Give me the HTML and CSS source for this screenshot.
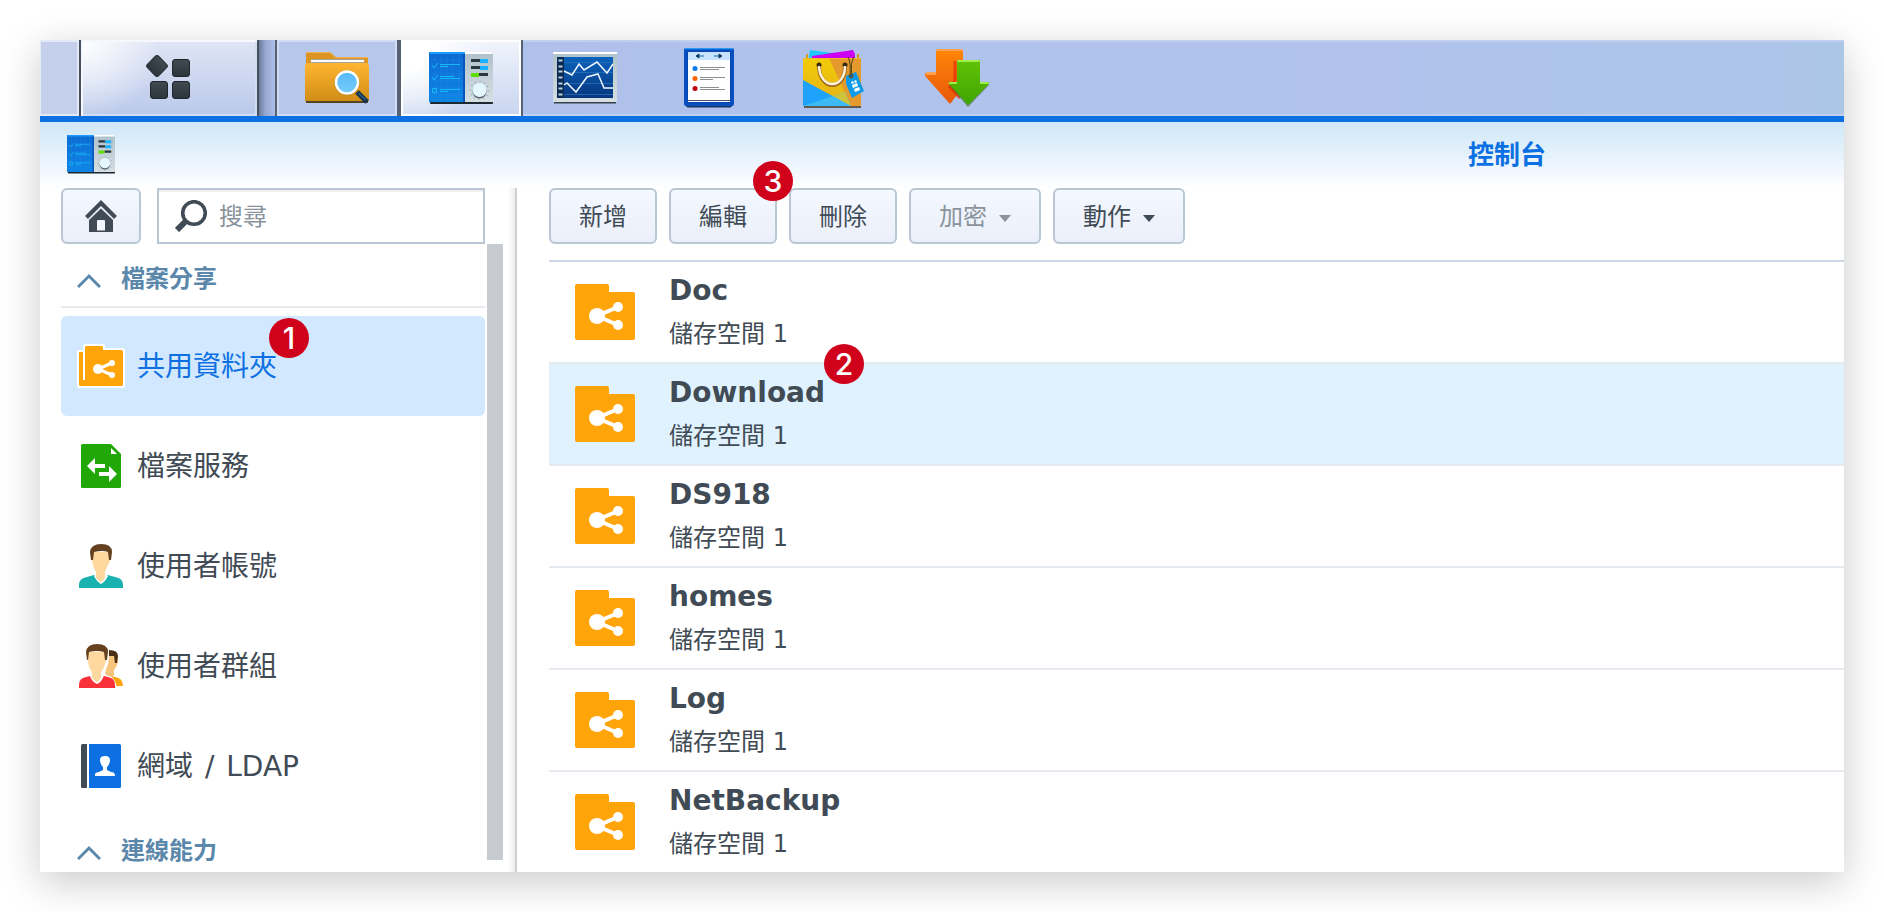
FILE: index.html
```html
<!DOCTYPE html>
<html lang="zh-Hant">
<head>
<meta charset="utf-8">
<title>控制台</title>
<link rel="stylesheet" href="styles.css">
</head>
<body>
<svg class="defs" width="0" height="0">
  <defs>
    <linearGradient id="dark" x1="0" y1="0" x2="0" y2="1"><stop offset="0" stop-color="#414951"/><stop offset="1" stop-color="#2c343c"/></linearGradient>
    <linearGradient id="gold" x1="0" y1="0" x2="0" y2="1"><stop offset="0" stop-color="#ffb531"/><stop offset="1" stop-color="#d08d16"/></linearGradient>
    <linearGradient id="lens" x1="0" y1="0" x2="0" y2="1"><stop offset="0" stop-color="#55b9f5"/><stop offset="1" stop-color="#78cdff"/></linearGradient>
    <linearGradient id="blue" x1="0" y1="0" x2="0" y2="1"><stop offset="0" stop-color="#0c69d0"/><stop offset="1" stop-color="#0e86e6"/></linearGradient>
    <linearGradient id="steel" x1="0" y1="0" x2="0" y2="1"><stop offset="0" stop-color="#b0c1cb"/><stop offset="1" stop-color="#d6dfe2"/></linearGradient>
    <linearGradient id="screen" x1="0" y1="0" x2="0" y2="1"><stop offset="0" stop-color="#0a62bb"/><stop offset="1" stop-color="#07367f"/></linearGradient>
    <linearGradient id="orange" x1="0" y1="0" x2="0" y2="1"><stop offset="0" stop-color="#ff8508"/><stop offset="1" stop-color="#e8570a"/></linearGradient>
    <linearGradient id="green" x1="0" y1="0" x2="0" y2="1"><stop offset="0" stop-color="#62c208"/><stop offset="1" stop-color="#3fa500"/></linearGradient>
    <linearGradient id="yellow" x1="0" y1="0" x2="0" y2="1"><stop offset="0" stop-color="#f2cb08"/><stop offset="1" stop-color="#e5b118"/></linearGradient>
    <symbol id="panel" viewBox="0 0 64 54">
      <rect x="1" y="49" width="63" height="3" rx="1" fill="#1d2833"/>
      <path d="M0 0H36V50H0Z" fill="url(#blue)"/>
      <path d="M6 2V50M12 2V50M18 2V50M24 2V50M30 2V50M0 8H34M0 15H34M0 22H34M0 29H34M0 36H34M0 43H34" stroke="#2d91ea" stroke-width=".5" opacity=".5"/>
      <path d="M0 2L1 0H36V2Z" fill="#1b9bff"/>
      <path d="M34 2H36V50H34Z" fill="#0a55bd"/>
      <path d="M36 0H63L64 2V50H36Z" fill="url(#steel)"/>
      <path d="M36 0H63L64 2H36Z" fill="#fff"/>
      <g stroke="#19b9f5" fill="none"><path d="M3 13l2 3 4-5M3 25l2 3 4-5"/><path d="M3.500 36.500h4v4h-4z"/><path d="M11 12.500H31M11 14.500H19M11 24.500H25M11 26.500H31M11 37.500H31M11 39.500H19"/></g>
      <g fill="#2b3741"><path d="M42 7h9v3h-9zM42 14h9v3h-9zM50 21h9v3h-9z"/></g>
      <path d="M51 7h8v4h-8zM51 14h8v4h-8z" fill="#18b2ff"/><path d="M42 21h8v4h-8z" fill="#5ddd05"/>
      <circle cx="50.500" cy="38.500" r="9" fill="none" stroke="#8f9ba4" stroke-width="1.500" stroke-dasharray=".8 3.900"/>
      <circle cx="50.500" cy="39.500" r="7" fill="#53606b"/><circle cx="50.500" cy="38" r="7" fill="#e4f6fe"/>
    </symbol>
    <symbol id="share" viewBox="0 0 60 56">
      <path d="M0 2Q0 0 2 0H32Q34 0 34 2V8H58Q60 8 60 10V54Q60 56 58 56H2Q0 56 0 54Z" fill="#ffa50a"/>
      <path d="M43 23L22 32L43 41" fill="none" stroke="#fff" stroke-width="4"/>
      <circle cx="22" cy="32" r="8" fill="#fff"/><circle cx="43" cy="23" r="5" fill="#fff"/><circle cx="43" cy="41" r="5" fill="#fff"/>
    </symbol>
  </defs>
</svg>
<div class="window">
  <nav class="taskbar">
    <div class="edge-cell"></div>
    <div class="menu-cell">
      <svg width="48" height="46" viewBox="0 0 48 46"><g fill="url(#dark)" stroke="#20262c" stroke-width="1"><rect x="4" y="4" width="16" height="16" rx="2.500" transform="rotate(45 12 12)"/><rect x="27.500" y="5.500" width="17" height="17" rx="2.500"/><rect x="5.500" y="27.500" width="17" height="17" rx="2.500"/><rect x="27.500" y="27.500" width="17" height="17" rx="2.500"/></g></svg>
    </div>
    <div class="menu-shade"></div>
    <div class="task">
      <svg width="64" height="54" viewBox="0 0 64 54"><rect x="1" y="48" width="62" height="3" fill="#584322"/><path d="M1 0H25L31 5H63V20H1Z" fill="#dc9521"/><path d="M1 .5H25L30 5.500H63" fill="none" stroke="#f0b559"/><path d="M6 7H59V12H6Z" fill="#fff"/><path d="M6 7.500H59M5 10.500H60" stroke="#aaa398"/><path d="M0 13L2 11H62L64 13V49H0Z" fill="url(#gold)"/><path d="M52 40L62 50" stroke="#14324c" stroke-width="5"/><path d="M53 41L61 48" stroke="#2b5f83" stroke-width="1.500"/><circle cx="42" cy="31" r="12.500" fill="#9b6c16" opacity=".5"/><circle cx="42" cy="30.500" r="11" fill="url(#lens)" stroke="#fff" stroke-width="2.500"/></svg>
    </div>
    <div class="task task-active"><svg width="64" height="54"><use href="#panel"/></svg></div>
    <div class="dock">
      <svg class="dock-monitor" width="64" height="54" viewBox="0 0 64 54"><path d="M1 48H63V51.500H1Z" fill="#35414a"/><rect width="64" height="50" rx="1" fill="url(#steel)"/><path d="M0 0H64V2H0Z" fill="#fff"/><rect x="4" y="5" width="56" height="41" fill="url(#screen)"/><rect x="4" y="5" width="7" height="41" fill="#0a2a54"/><path d="M11 20.500H60M11 31.500H60M11 42.500H60M11 10.500H60" stroke="#2c75bd" opacity=".7"/><path d="M5.500 8.500h4M5.500 14.500h4M5.500 19.500h4M5.500 25.500h4M5.500 31.500h4M5.500 36.500h4M5.500 42.500h4" stroke="#b9d2de" stroke-width="2"/><path d="M11 19L19 23L26 12L31 18L44 10L54 21L60 12M11 33L14 31L23 40L34 25L45 22L51 36H60" fill="none" stroke="#eef6ff" stroke-width="1.500"/></svg>
      <svg class="dock-notes" width="50" height="60" viewBox="0 0 50 60"><rect x="2" y="4" width="46" height="55.500" rx="2" fill="#17365f"/><rect width="50" height="58" rx="2" fill="#084fc0"/><path d="M1 .5H49" stroke="#2a98f5" stroke-width="1.500"/><rect x="3" y="3" width="44" height="52" fill="#0746ad"/><rect x="4" y="4" width="42" height="50" fill="#fff"/><rect x="4" y="4" width="42" height="8" fill="#c9e3ff"/><path d="M13 8H20M30 8H37" stroke="#6aa9d3" stroke-width="2"/><path d="M12 8l3-2v4zM38 8l-3-2v4z" fill="#173f5e" stroke="#173f5e"/><circle cx="11" cy="20.500" r="2.500" fill="#087bea"/><circle cx="11" cy="30.500" r="2.500" fill="#f86500"/><circle cx="11" cy="40.500" r="2.500" fill="#bd0008"/><path d="M16 19.500H41M16 21.500H35M16 29.500H41M16 31.500H29M16 39.500H35M16 41.500H41" stroke="#8b8f93"/><path d="M4 52.500H46" stroke="#46546a"/></svg>
      <svg class="dock-bag" width="64" height="62" viewBox="0 0 64 62"><path d="M7 2L30 5V14H5Z" fill="#21c8f6"/><path d="M4 6V14M55 6V14" stroke="#d59a20" stroke-width="2"/><path d="M9 8L50 2L52 6V14H9Z" fill="#cd00f3"/><path d="M1 57H58V60H1Z" fill="#5f5b52"/><path d="M0 10H58V58H0Z" fill="url(#yellow)"/><path d="M26 10H58V58H48Z" fill="#e49a2c"/><path d="M0 32L48 58H0Z" fill="#1fa2fb"/><path d="M0 58L42 44L48 58Z" fill="#3cbaf6"/><path d="M30 48L42 44L48 58Z" fill="#cfc33c"/><path d="M0 10.500H58" stroke="#f1b928"/><circle cx="16" cy="17" r="2.500" fill="#382911"/><circle cx="42" cy="17" r="2.500" fill="#382911"/><path d="M16 19C17 43 42 43 42 19" fill="none" stroke="#9d6b1e" stroke-width="4"/><path d="M16 18C17 42 42 42 42 18" fill="none" stroke="#fff3dd" stroke-width="2.500"/><path d="M43 28L53 24L61 43L49 50L43 36Z" fill="#0e9ae8"/><path d="M45 9Q48 14 47 28M51 9Q47 14 49 28" fill="none" stroke="#4d3c17"/><circle cx="48" cy="28" r="2" fill="#17669b" stroke="#6d501c"/><path d="M48 34l2-1 1 2-2 1zM51 33l2-1 1 2-2 1zM49 37l5-2 1 3-5 2zM51 41l5-2 1 3-5 2z" fill="#fff"/></svg>
      <svg class="dock-arrows" width="66" height="60" viewBox="0 0 66 60"><path d="M11 2H38V25H48L25 55L0 27V24H11Z" fill="url(#orange)"/><path d="M12 0H37L38 2H11ZM2 23H11V26H0Z" fill="#ffa14e"/><path d="M30 12V32L25 38L35 49" fill="none" stroke="#e33609" stroke-width="3" opacity=".8"/><path d="M24 36L43 58L64 36Z" fill="#376d2c" opacity=".6"/><path d="M32 11H55V33H64V35L43 56L24 35V33H32Z" fill="url(#green)"/><path d="M33 11H54L55 13H32ZM25 33H32V35H23ZM55 33H63L64 35H55Z" fill="#9df04c"/></svg>
    </div>
  </nav>
  <header class="titlebar">
    <svg width="48" height="40" viewBox="0 0 64 54" preserveAspectRatio="none"><use href="#panel" width="64" height="54"/></svg>
    <h1 class="title">控制台</h1>
  </header>
  <div class="body">
    <aside class="side">
      <div class="side-tools">
        <button class="btn home"><svg width="32" height="32" viewBox="0 0 32 32"><path d="M1.500 17.500L16 3L30.500 17.500" fill="none" stroke="#414b55" stroke-width="4.200"/><path d="M16 8.500L28 20V32H20V20.500H12V32H4V20Z" fill="#414b55"/><path d="M12 21.500Q12 20 13.500 20H18.500Q20 20 20 21.500V30H12Z" fill="#f2f6fe"/><path d="M4 30.500H28V32H4Z" fill="#414b55"/></svg></button>
        <label class="search"><svg width="32" height="32" viewBox="0 0 32 32"><circle cx="19" cy="13" r="11.300" fill="none" stroke="#414b55" stroke-width="3.600"/><path d="M10.500 21.500L2 30" stroke="#414b55" stroke-width="6"/></svg><span>搜尋</span></label>
      </div>
      <div class="side-body">
        <div class="side-list">
          <div class="group"><svg width="24" height="16" viewBox="0 0 24 16"><path d="M1 14L12 3L23 14" fill="none" stroke="#5a87aa" stroke-width="3"/></svg><span>檔案分享</span></div>
          <div class="item item-on">
            <svg width="48" height="44" viewBox="0 0 48 44"><path d="M8 2H26V6H46V42H2V8H8Z" fill="#fff" stroke="#fff" stroke-width="4" stroke-linejoin="round"/><path d="M2 9Q2 8 3 8H6V36H8V3.500Q8 2 9.500 2H24.500Q26 2 26 3.500V6H44.500Q46 6 46 7.500V40.500Q46 42 44.500 42H3.500Q2 42 2 40.500Z" fill="#ffa50a"/><path d="M35 19L21 25L35 31" fill="none" stroke="#fff" stroke-width="3"/><circle cx="21" cy="25" r="5" fill="#fff"/><circle cx="35" cy="19" r="3" fill="#fff"/><circle cx="35" cy="31" r="3" fill="#fff"/></svg>
            <span class="label">共用資料夾<i class="badge badge-1">1</i></span>
          </div>
          <div class="item">
            <svg width="48" height="44" viewBox="0 0 48 44"><path d="M4 1.500Q4 0 5.500 0H34L44 10V42.500Q44 44 42.500 44H5.500Q4 44 4 42.500Z" fill="#22a708"/><path d="M34 4V10H40Z" fill="#fff"/><path d="M10 22L18 14V20H28V24H18V30ZM22 28H32V22L40 30L32 38V32H22Z" fill="#fff"/></svg>
            <span class="label">檔案服務</span>
          </div>
          <div class="item">
            <svg width="48" height="44" viewBox="0 0 48 44"><path d="M2 44V41Q2 34 10 33L17 31L24 36L31 31L38 33Q46 34 46 41V44Z" fill="#19b2b0"/><path d="M17 32L20 30H28L31 32Q28 38 24 40Q20 38 17 32Z" fill="#fff"/><path d="M15 8H33V17L30 23Q29 26 28 28V34L24 38.500L19 34V28Q16 23 15 17Z" fill="#ffd8a0"/><path d="M14 16L13 8Q14 0 24 0Q35 0 35 8L34 16H32L31 8Q26 6 17 8L16 16Z" fill="#64401e"/></svg>
            <span class="label">使用者帳號</span>
          </div>
          <div class="item">
            <svg width="48" height="44" viewBox="0 0 48 44"><path d="M32 32L38 33Q46 34 46 42H36Z" fill="#ffa50a"/><path d="M32 12H41V18Q39 24 37 26V32L33 35L28 30Z" fill="#f6c47d"/><path d="M32 6Q41 6 41 12L40 19H38L37 12H32Z" fill="#4a2e15"/><path d="M1 44V41Q2 34 10 31L20 28L32 32Q39 34 39.500 44Z" fill="#fff"/><path d="M2 44V41Q2 34 9 33L13 32L20 37L27 32L31 33Q38 34 38 41V44Z" fill="#f9323a"/><path d="M13 32L15 30L27 31Q25 38 20 40Q15 38 13 32Z" fill="#fff"/><path d="M30 6Q32 14 30 20L27 27V32" fill="none" stroke="#fff" stroke-width="2"/><path d="M11 8H29V17Q27 25 24 28V34L20 38.500L15 34V28Q12 25 11 17Z" fill="#ffd8a0"/><path d="M10 16L9 8Q10 0 20 0Q31 0 31 8L30 16H28L27 8Q20 6 12 8L11 16Z" fill="#64401e"/></svg>
            <span class="label">使用者群組</span>
          </div>
          <div class="item">
            <svg width="48" height="44" viewBox="0 0 48 44"><path d="M4 1.500Q4 0 5.500 0H10V44H5.500Q4 44 4 42.500Z" fill="#414b55"/><path d="M12 0H42.500Q44 0 44 1.500V42.500Q44 44 42.500 44H12Z" fill="#0d70e2"/><path d="M18 32V30Q19 28 22 28L26 26V23Q23 20 23 16Q23 12 28 12Q33 12 33 16Q33 20 30 23V26L34 28Q38 28 38 32Z" fill="#fff"/></svg>
            <span class="label">網域 / LDAP</span>
          </div>
          <div class="group"><svg width="24" height="16" viewBox="0 0 24 16"><path d="M1 14L12 3L23 14" fill="none" stroke="#5a87aa" stroke-width="3"/></svg><span>連線能力</span></div>
        </div>
        <div class="scrollbar"></div>
      </div>
    </aside>
    <div class="divider"></div>
    <main class="main">
      <div class="toolbar">
        <button class="btn">新增</button>
        <button class="btn">編輯<i class="badge badge-3">3</i></button>
        <button class="btn">刪除</button>
        <button class="btn btn-menu btn-off">加密<span class="caret"></span></button>
        <button class="btn btn-menu">動作<span class="caret"></span></button>
      </div>
      <div class="rows">
        <div class="row"><svg width="60" height="56"><use href="#share"/></svg><div class="info"><b class="name">Doc</b><span class="sub">儲存空間 1</span></div></div>
        <div class="row row-on"><svg width="60" height="56"><use href="#share"/></svg><div class="info"><b class="name">Download<i class="badge badge-2">2</i></b><span class="sub">儲存空間 1</span></div></div>
        <div class="row"><svg width="60" height="56"><use href="#share"/></svg><div class="info"><b class="name">DS918</b><span class="sub">儲存空間 1</span></div></div>
        <div class="row"><svg width="60" height="56"><use href="#share"/></svg><div class="info"><b class="name">homes</b><span class="sub">儲存空間 1</span></div></div>
        <div class="row"><svg width="60" height="56"><use href="#share"/></svg><div class="info"><b class="name">Log</b><span class="sub">儲存空間 1</span></div></div>
        <div class="row"><svg width="60" height="56"><use href="#share"/></svg><div class="info"><b class="name">NetBackup</b><span class="sub">儲存空間 1</span></div></div>
      </div>
    </main>
  </div>
</div>
</body>
</html>
```
FILE: styles.css
```css
* { box-sizing: border-box; }
html, body { height: 100%; margin: 0; overflow: hidden; }
body { padding: 40px; background: #fff; color: #414b55; font-family: "DejaVu Sans", "Noto Sans CJK TC", sans-serif; }
svg { display: block; flex: none; }
.defs { position: absolute; }
.window { display: flex; flex-direction: column; width: 1804px; height: 832px; overflow: hidden; background: #fff; box-shadow: 0 10px 38px rgba(0, 0, 0, .21); }

.taskbar { display: flex; flex: none; height: 82px; border-bottom: 6px solid #0d70e2; background: linear-gradient(90deg, #adbde8, #b0c3ec 45%, #b1c3ec 75%, #acc6e8); }
.edge-cell { width: 39px; border: 2px solid #e2e9f7; border-left-width: 1px; background: #c4d0eb; }
.menu-cell { display: flex; width: 180px; padding: 14px 0 0 64px; border: solid; border-width: 0 2px; border-color: #46505f; background: radial-gradient(circle at 0 0, #fff, rgba(255, 255, 255, 0) 80px), linear-gradient(#e0e5f5, #bac9eb); box-shadow: inset 2px 2px #f6f8fd, inset -2px -2px #d2dcf3; }
.menu-shade { width: 16px; background: linear-gradient(90deg, #6c7b9b, #96a8d0 40%, #adbde9); }
.task { display: flex; width: 124px; padding: 12px 0 0 28px; border: solid #566174; border-width: 0 2px; background: #b7c7eb; box-shadow: inset 0 0 0 2px #cfdcf3; }
.task-active { background: radial-gradient(circle at 0 0, #fff 30px, rgba(255, 255, 255, 0) 90px), linear-gradient(#f0f4fc, #c8d5f0); box-shadow: inset 0 0 0 2px #fff; }
.dock { display: flex; flex: 1; align-items: flex-start; padding-left: 30px; border: solid #c1cff0; border-width: 2px 0; }
.dock-monitor { margin-top: 10px; }
.dock-notes { margin: 6px 0 0 67px; }
.dock-bag { margin: 6px 0 0 69px; }
.dock-arrows { margin: 7px 0 0 58px; }

.titlebar { display: flex; flex: none; height: 66px; padding: 13px 0 0 27px; background: linear-gradient(#cfe6f9, #e3f2fa 45%, #edf5fe 65%, #fff); }
.title { margin: 1px 0 0 1353px; color: #0d70e2; font-size: 26px; line-height: 38px; }

.body { display: flex; flex: 1; min-height: 0; }
.side { display: flex; flex-direction: column; width: 463px; padding-left: 21px; }
.side-tools { display: flex; flex: none; gap: 16px; }
.btn { position: relative; display: flex; align-items: center; justify-content: center; width: 108px; height: 56px; margin: 0; padding: 1px 0 0; border: 2px solid #b9c7d5; border-radius: 6px; background: linear-gradient(#f4f8ff, #eaeff9); color: #414b55; font: 24px/32px "DejaVu Sans", "Noto Sans CJK TC", sans-serif; }
.home { width: 80px; padding: 0; }
.search { display: flex; align-items: center; gap: 12px; width: 328px; height: 56px; padding-left: 16px; border: 2px solid #b9c7d5; background: #fff; box-shadow: inset 0 2px #f0f0f0; color: #8a939c; font-size: 24px; line-height: 32px; }
.search span { padding-top: 2px; }
.side-body { display: flex; flex: 1; min-height: 0; gap: 2px; }
.side-list { width: 424px; overflow: hidden; }
.group { display: flex; align-items: center; gap: 20px; height: 64px; margin-bottom: 8px; padding: 9px 0 0 16px; border-bottom: 2px solid #e6ebf0; color: #5a87aa; font-size: 24px; font-weight: bold; line-height: 36px; }
.group svg { margin-top: 2px; }
.group span { margin-top: -2px; }
.item { display: flex; align-items: center; gap: 12px; height: 100px; padding-left: 16px; border-radius: 6px; font-size: 28px; line-height: 40px; word-spacing: 3px; }
.item svg { margin-top: -1px; }
.item-on { background: #d2e8ff; color: #0d70e2; }
.label { position: relative; padding-top: 2px; }
.scrollbar { width: 16px; height: 616px; background: #c8ccd0; }
.divider { width: 14px; border-right: 2px solid #d0d0d0; background: linear-gradient(90deg, #fff 40%, #ececec); }

.main { flex: 1; min-width: 0; padding-left: 32px; }
.toolbar { display: flex; gap: 12px; height: 74px; border-bottom: 2px solid #cbd7e5; }
.btn-menu { gap: 12px; width: 132px; }
.btn-off { color: #8a939c; }
.caret { margin-top: 4px; border: solid transparent; border-width: 7px 6px 0; border-top-color: currentColor; }
.row { display: flex; gap: 34px; height: 102px; padding: 22px 0 0 26px; border-bottom: 2px solid #e6ebf2; }
.row-on { background: #dff2fe; }
.info { display: flex; flex-direction: column; align-items: flex-start; margin-top: -13px; }
.name { position: relative; font-size: 28px; line-height: 40px; }
.sub { font-size: 24px; line-height: 36px; margin-top: 5px; }

.badge { position: absolute; z-index: 2; width: 40px; height: 40px; border-radius: 50%; background: #d0021b; color: #fff; font: 500 30px/40px Inter, sans-serif; text-align: center; }
.badge-1 { top: -27px; left: 132px; }
.badge-2 { top: -29px; left: 155px; }
.badge-3 { top: -29px; left: 82px; }
```
